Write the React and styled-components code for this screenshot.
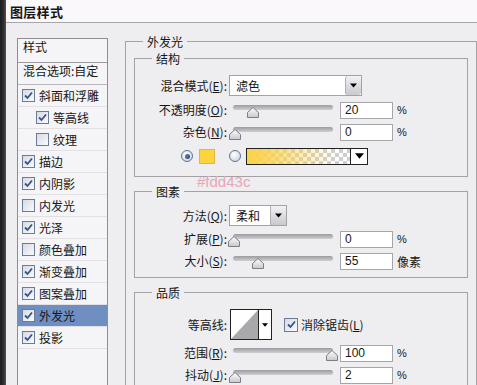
import React from 'react';
import styled, { createGlobalStyle } from 'styled-components';

const Global = createGlobalStyle`
  html, body { margin: 0; padding: 0; background: #eeedf0; }
  body {
    font-family: "Noto Sans CJK SC", "Noto Sans", sans-serif;
    font-size: 12px;
    color: #161616;
  }
  #root { width: 477px; height: 385px; overflow: hidden; }
`;

const Screen = styled.div`
  display: flex;
  width: 477px;
  height: 385px;
  overflow: hidden;
`;

const DarkEdge = styled.div`
  width: 6px;
  flex: none;
  background: linear-gradient(to right, #1c1c1c, #2e2e2e 60%, #555);
`;

const Window = styled.div`
  flex: 1;
  min-width: 0;
  display: flex;
  flex-direction: column;
  background: #eeedf0;
`;

const TitleBar = styled.div`
  height: 22px;
  flex: none;
  display: flex;
  align-items: center;
  padding-left: 4px;
  background: #faf8fb;
  border-bottom: 1px solid #a7a5a9;
  font-weight: bold;
  font-size: 13px;
  letter-spacing: 0.3px;
`;

const Body = styled.div`
  flex: 1;
  min-height: 0;
  display: flex;
  padding: 10px 0 0 11px;
  gap: 17px;
`;

/* ---------- left list ---------- */
const StyleList = styled.div`
  width: 89px;
  flex: none;
  margin-top: 5px;
  border: 1px solid #8f8d92;
  border-bottom: none;
  background: #f5f4f7;
  display: flex;
  flex-direction: column;
`;

const ListHeader = styled.div`
  height: 23px;
  padding-left: 5px;
  line-height: 16px;
  border-bottom: 1px solid #9c9a9e;
`;

const BlendRow = styled.div`
  height: 21px;
  padding-left: 5px;
  line-height: 16px;
  border-bottom: 1px solid #b9b7bc;
  white-space: nowrap;
`;

const ListRow = styled.div`
  box-sizing: border-box;
  height: 22px;
  display: flex;
  align-items: center;
  gap: 4px;
  padding-left: ${p => (p.$indent ? 18 : 4)}px;
  border-bottom: 1px solid #e2e0e5;
  background: ${p => (p.$active ? '#6f8fc2' : 'transparent')};
  white-space: nowrap;
`;

const CheckBox = styled.span`
  width: 11px;
  height: 11px;
  flex: none;
  border: 1px solid #6a7c96;
  background: linear-gradient(135deg, #d8dae3, #fafafc);
  display: inline-flex;
  align-items: center;
  justify-content: center;
`;

const Check = ({ on }) => (
  <CheckBox>
    {on && (
      <svg width="11" height="11" viewBox="0 0 11 11">
        <path d="M2 5.5 L4.5 8 L9 2.5" fill="none" stroke="#34548a" strokeWidth="1.8" />
      </svg>
    )}
  </CheckBox>
);

/* ---------- right side ---------- */
const RightCol = styled.div`
  position: relative;
  width: 352px;
  flex: none;
  display: flex;
  flex-direction: column;
`;

const Group = styled.fieldset`
  margin: ${p => p.$mt || 0}px 0 0 0;
  padding: ${p => p.$pad || '0'};
  border: 1px solid #a4a2a6;
  min-width: 0;
  box-sizing: border-box;
`;

const Legend = styled.legend`
  margin-left: ${p => p.$ml}px;
  padding: 0 4px;
  font-size: 12px;
  line-height: 17px;
`;

const GroupBody = styled.div`
  display: flex;
  flex-direction: column;
  padding: ${p => p.$pad};
`;

const Row = styled.div`
  display: flex;
  align-items: center;
  height: ${p => p.$h || 22}px;
  margin-top: ${p => p.$mt || 0}px;
`;

const Label = styled.span`
  width: 94px;
  flex: none;
  box-sizing: border-box;
  padding-right: 2px;
  text-align: right;
  white-space: nowrap;
  line-height: 16px;
`;

const Select = styled.div`
  box-sizing: border-box;
  width: ${p => p.$w}px;
  height: 21px;
  display: flex;
  align-items: stretch;
  border: 1px solid #a3a3a6;
  background: #fff;
`;

const SelectText = styled.span`
  flex: 1;
  padding-left: 6px;
  display: flex;
  align-items: center;
`;

const DropButton = styled.span`
  width: ${p => p.$w || 14}px;
  flex: none;
  display: flex;
  align-items: center;
  justify-content: center;
  border-left: 1px solid ${p => (p.$plain ? '#222' : '#b0b0b4')};
  border-radius: ${p => (p.$round ? '3px' : '0')};
  background: ${p => (p.$plain ? '#fff' : 'linear-gradient(#f2f2f4, #c9c9ce)')};
`;

const Arrow = ({ size = 7 }) => (
  <svg width={size} height={Math.ceil(size * 0.6)} viewBox="0 0 10 6">
    <path d="M0 0 H10 L5 6 Z" fill="#000" />
  </svg>
);

const SliderBox = styled.div`
  position: relative;
  width: 100px;
  height: 16px;
  margin-left: 4px;
  flex: none;
`;

const Track = styled.div`
  position: absolute;
  left: 0;
  right: 0;
  top: 3px;
  height: 5px;
  border-radius: 3px;
  background: linear-gradient(#9c9ca0, #cfcfd3);
`;

const Thumb = styled.svg`
  position: absolute;
  top: 5px;
  margin-left: -6px;
`;

const Slider = ({ pos }) => (
  <SliderBox>
    <Track />
    <Thumb width="12" height="11" viewBox="0 0 12 11" style={{ left: `${pos}%` }}>
      <defs>
        <linearGradient id="tg" x1="0" y1="0" x2="0" y2="1">
          <stop offset="0" stopColor="#ffffff" />
          <stop offset="1" stopColor="#c8c8cc" />
        </linearGradient>
      </defs>
      <path d="M6 0.5 L11.5 5.5 V10.5 H0.5 V5.5 Z" fill="url(#tg)" stroke="#7d7d82" />
    </Thumb>
  </SliderBox>
);

const NumInput = styled.div`
  box-sizing: border-box;
  width: 53px;
  height: 17px;
  margin-left: 7px;
  flex: none;
  border: 1px solid #a6a6a9;
  background: #fff;
  padding-left: 4px;
  font-family: "Liberation Sans", Arial, sans-serif;
  font-size: 12px;
  line-height: 15px;
`;

const Unit = styled.span`
  margin-left: 4px;
  font-family: ${p => (p.$cjk ? '"Noto Sans CJK SC", sans-serif' : '"Liberation Sans", Arial, sans-serif')};
  font-size: ${p => (p.$cjk ? 12 : 11)}px;
`;

const ColorRow = styled.div`
  display: flex;
  align-items: center;
  height: 22px;
  margin-top: 2px;
  padding-left: 46px;
`;

const Radio = styled.span`
  width: 10px;
  height: 10px;
  flex: none;
  border-radius: 50%;
  border: 1px solid #5e7490;
  background: radial-gradient(circle at 40% 35%, #ffffff, #c4cedb);
  display: flex;
  align-items: center;
  justify-content: center;
  margin-right: ${p => p.$mr}px;

  &::after {
    content: '';
    display: ${p => (p.$on ? 'block' : 'none')};
    width: 5px;
    height: 5px;
    border-radius: 50%;
    background: radial-gradient(circle at 35% 35%, #5a7fb8, #1d3d6e);
  }
`;

const Swatch = styled.span`
  width: 16px;
  height: 15px;
  flex: none;
  background: #fdd43c;
  border: 1px solid #e0b840;
  box-sizing: border-box;
  margin-right: 14px;
`;

const GradientBox = styled.div`
  box-sizing: border-box;
  width: 122px;
  height: 17px;
  display: flex;
  border: 1px solid #222;
`;

const GradientFill = styled.span`
  flex: 1;
  background:
    linear-gradient(to right, #fcd24a 0%, rgba(252, 210, 74, 0.85) 20%, rgba(252, 210, 74, 0) 85%),
    repeating-conic-gradient(#cfcfcf 0 25%, #ffffff 0 50%) 0 0 / 8px 8px;
`;

const Contour = styled.div`
  box-sizing: border-box;
  width: 42px;
  height: 31px;
  display: flex;
  border: 1px solid #222;
  background: #fff;
  margin-left: 1px;
  flex: none;
`;

const ContourGraph = styled.svg`
  flex: 1;
  display: block;
`;

const AntiAlias = styled.label`
  display: flex;
  align-items: center;
  gap: 3px;
  margin-left: 12px;
  white-space: nowrap;

  & > span:first-child {
    width: 12px;
    height: 12px;
  }
`;

const HexNote = styled.div`
  position: absolute;
  left: 72px;
  top: 140px;
  font-family: "Liberation Sans", Arial, sans-serif;
  font-size: 15px;
  line-height: 18px;
  color: #e9a6b6;
`;

const listItems = [
  { t: '斜面和浮雕', on: true },
  { t: '等高线', on: true, indent: true },
  { t: '纹理', on: false, indent: true },
  { t: '描边', on: true },
  { t: '内阴影', on: true },
  { t: '内发光', on: false },
  { t: '光泽', on: true },
  { t: '颜色叠加', on: false },
  { t: '渐变叠加', on: true },
  { t: '图案叠加', on: true },
  { t: '外发光', on: true, active: true },
  { t: '投影', on: true },
];

const SliderRow = ({ label, pos, value, unit, cjk, mt }) => (
  <Row $mt={mt}>
    <Label>{label}</Label>
    <Slider pos={pos} />
    <NumInput>{value}</NumInput>
    <Unit $cjk={cjk}>{unit}</Unit>
  </Row>
);

export default function App() {
  return (
    <>
      <Global />
      <Screen>
        <DarkEdge />
        <Window>
          <TitleBar>图层样式</TitleBar>
          <Body>
            <StyleList>
              <ListHeader>样式</ListHeader>
              <BlendRow>混合选项:自定</BlendRow>
              {listItems.map(it => (
                <ListRow key={it.t} $indent={it.indent} $active={it.active}>
                  <Check on={it.on} />
                  <span>{it.t}</span>
                </ListRow>
              ))}
            </StyleList>

            <RightCol>
              <Group $pad="0 8px">
                <Legend $ml={9}>外发光</Legend>

                <Group>
                  <Legend $ml={17}>结构</Legend>
                  <GroupBody $pad="8px 0 9px 0">
                    <Row $h={21}>
                      <Label>混合模式(<u>E</u>):</Label>
                      <Select $w={133}>
                        <SelectText>滤色</SelectText>
                        <DropButton $w={15} $round>
                          <Arrow />
                        </DropButton>
                      </Select>
                    </Row>
                    <SliderRow label={<>不透明度(<u>O</u>):</>} pos={20} value="20" unit="%" mt={3} />
                    <SliderRow label={<>杂色(<u>N</u>):</>} pos={2} value="0" unit="%" />
                    <ColorRow>
                      <Radio $on $mr={6} />
                      <Swatch />
                      <Radio $mr={5} />
                      <GradientBox>
                        <GradientFill />
                        <DropButton $w={16} $plain>
                          <Arrow size={9} />
                        </DropButton>
                      </GradientBox>
                    </ColorRow>
                  </GroupBody>
                </Group>

                <Group $mt={6}>
                  <Legend $ml={17}>图素</Legend>
                  <GroupBody $pad="5px 0 5px 0">
                    <Row $h={21}>
                      <Label>方法(<u>Q</u>):</Label>
                      <Select $w={58}>
                        <SelectText>柔和</SelectText>
                        <DropButton $w={15}>
                          <Arrow />
                        </DropButton>
                      </Select>
                    </Row>
                    <SliderRow label={<>扩展(<u>P</u>):</>} pos={1} value="0" unit="%" mt={2} />
                    <SliderRow label={<>大小(<u>S</u>):</>} pos={25} value="55" unit="像素" cjk />
                  </GroupBody>
                </Group>

                <Group $mt={6}>
                  <Legend $ml={17}>品质</Legend>
                  <GroupBody $pad="8px 0 10px 0">
                    <Row $h={31}>
                      <Label>等高线:</Label>
                      <Contour>
                        <ContourGraph viewBox="0 0 28 29" preserveAspectRatio="none">
                          <polygon points="0,29 28,0 28,29" fill="#a9a9ab" />
                        </ContourGraph>
                        <DropButton $w={12} $plain>
                          <Arrow size={6} />
                        </DropButton>
                      </Contour>
                      <AntiAlias>
                        <Check on />
                        <span>消除锯齿(<u>L</u>)</span>
                      </AntiAlias>
                    </Row>
                    <SliderRow label={<>范围(<u>R</u>):</>} pos={99} value="100" unit="%" mt={2} />
                    <SliderRow label={<>抖动(<u>J</u>):</>} pos={2} value="2" unit="%" />
                  </GroupBody>
                </Group>
              </Group>

              <HexNote>#fdd43c</HexNote>
            </RightCol>
          </Body>
        </Window>
      </Screen>
    </>
  );
}
